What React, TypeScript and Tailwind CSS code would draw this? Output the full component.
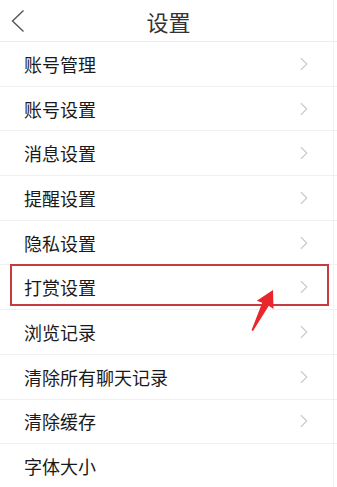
import { ChevronRight } from 'lucide-react';

const items = ['账号管理', '账号设置', '消息设置', '提醒设置', '隐私设置', '打赏设置', '浏览记录', '清除所有聊天记录', '清除缓存', '字体大小'];

export default function App() {
  return (
    <div
      className="relative w-[337px] h-[487px] overflow-hidden bg-white text-[#1a1a1a]"
      style={{ fontFamily: '"Noto Sans CJK SC", "Noto Sans", sans-serif' }}
    >
      {/* header */}
      <header className="h-[42px] grid grid-cols-[60px_1fr_60px] items-center border-b border-[#ececec]">
        <button className="pl-[11px] flex items-center">
          <svg width="14" height="24" viewBox="0 0 14 24">
            <polyline points="12.5,1.5 1.5,12 12.5,22.5" fill="none" stroke="#555" strokeWidth="1.4" />
          </svg>
        </button>
        <h1 className="text-center text-[22px] text-[#333] leading-none">设置</h1>
        <div />
      </header>

      <div>
        {items.map((label, i) => (
          <div
            key={label}
            className="h-[44.7px] flex items-center justify-between pl-[24px] pr-[22px] border-b border-[#f0f0f0]"
          >
            <span className="text-[18px] leading-none">{label}</span>
            {i < items.length - 1 && <ChevronRight size={22} strokeWidth={1.2} className="text-[#cbcbcb]" />}
          </div>
        ))}
      </div>

      {/* highlight box */}
      <div className="absolute left-[10px] top-[264px] w-[319px] h-[42px] border-2 border-[#c9393d]" />

      {/* arrow */}
      <svg className="absolute left-[248px] top-[286px]" width="30" height="48" viewBox="0 0 30 48">
        <polygon points="25,4 25.5,23 20.8,19.8 5,45 3.5,44.2 14.2,16.8 8.8,14.8" fill="#e8262b" />
      </svg>

      {/* right edge line */}
      <div className="absolute right-[3px] top-0 bottom-0 w-px bg-[#f2f2f2]" />
    </div>
  );
}
